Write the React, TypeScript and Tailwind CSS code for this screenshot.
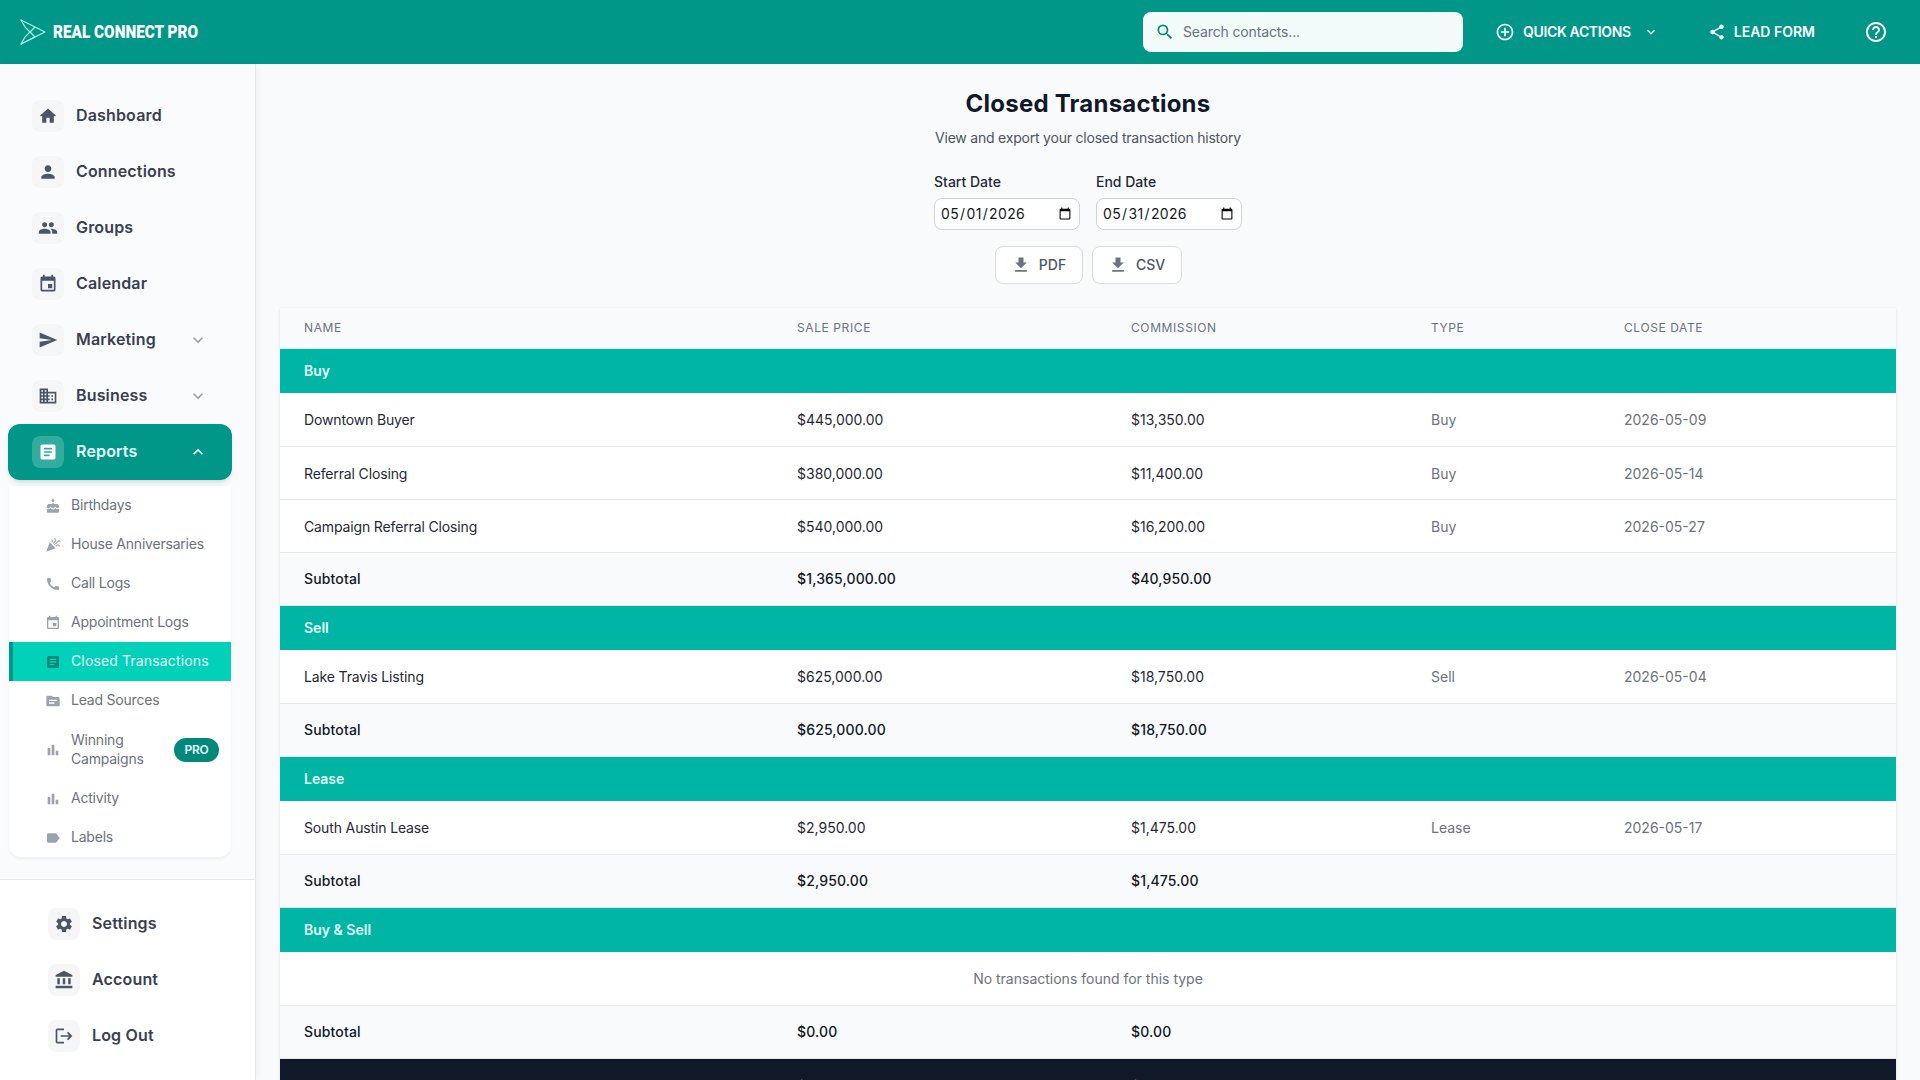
import { ReactNode } from "react";
import { IconType } from "react-icons";
import {
  MdHome, MdPerson, MdPeople, MdEvent, MdSend, MdBusiness, MdExpandMore, MdExpandLess, MdArticle,
  MdCake, MdCelebration, MdCall, MdSource, MdBarChart, MdLabel, MdSettings, MdAccountBalance,
  MdLogout, MdSearch, MdAddCircleOutline, MdShare, MdHelpOutline, MdFileDownload,
} from "react-icons/md";

const navItems: { title: string; icon: IconType; chevron?: boolean }[] = [
  { title: "Dashboard", icon: MdHome },
  { title: "Connections", icon: MdPerson },
  { title: "Groups", icon: MdPeople },
  { title: "Calendar", icon: MdEvent },
  { title: "Marketing", icon: MdSend, chevron: true },
  { title: "Business", icon: MdBusiness, chevron: true },
];

const subItems: { title: string; icon: IconType; active?: boolean; pro?: boolean }[] = [
  { title: "Birthdays", icon: MdCake },
  { title: "House Anniversaries", icon: MdCelebration },
  { title: "Call Logs", icon: MdCall },
  { title: "Appointment Logs", icon: MdEvent },
  { title: "Closed Transactions", icon: MdArticle, active: true },
  { title: "Lead Sources", icon: MdSource },
  { title: "Winning Campaigns", icon: MdBarChart, pro: true },
  { title: "Activity", icon: MdBarChart },
  { title: "Labels", icon: MdLabel },
];

const bottomItems = [
  { title: "Settings", icon: MdSettings },
  { title: "Account", icon: MdAccountBalance },
  { title: "Log Out", icon: MdLogout },
];

type Tx = { name: string; price: string; commission: string; type: string; date: string };

const sections: { title: string; rows: Tx[]; price: string; commission: string }[] = [
  {
    title: "Buy",
    rows: [
      { name: "Downtown Buyer", price: "$445,000.00", commission: "$13,350.00", type: "Buy", date: "2026-05-09" },
      { name: "Referral Closing", price: "$380,000.00", commission: "$11,400.00", type: "Buy", date: "2026-05-14" },
      { name: "Campaign Referral Closing", price: "$540,000.00", commission: "$16,200.00", type: "Buy", date: "2026-05-27" },
    ],
    price: "$1,365,000.00",
    commission: "$40,950.00",
  },
  {
    title: "Sell",
    rows: [{ name: "Lake Travis Listing", price: "$625,000.00", commission: "$18,750.00", type: "Sell", date: "2026-05-04" }],
    price: "$625,000.00",
    commission: "$18,750.00",
  },
  {
    title: "Lease",
    rows: [{ name: "South Austin Lease", price: "$2,950.00", commission: "$1,475.00", type: "Lease", date: "2026-05-17" }],
    price: "$2,950.00",
    commission: "$1,475.00",
  },
  { title: "Buy & Sell", rows: [], price: "$0.00", commission: "$0.00" },
];

function Logo() {
  return (
    <svg width="26" height="26" viewBox="0 0 26 26" fill="none" stroke="#a7f3e4" strokeWidth="1.2" strokeLinejoin="round">
      <path d="M1 1 L25 13 L1 25 L5 18 L15 8 L7 4 Z" />
      <path d="M1 1 L5 8 L15 18 L7 22 L1 25" />
    </svg>
  );
}

function IconBox({ children, active }: { children: ReactNode; active?: boolean }) {
  return (
    <span className={`w-8 h-8 rounded-lg flex items-center justify-center shrink-0 ${active ? "bg-white/20 text-white" : "bg-[#f4f6f8] text-[#4b5563]"}`}>
      {children}
    </span>
  );
}

function Sidebar() {
  return (
    <aside className="relative z-10 w-[256px] shrink-0 border-r border-[#e5e7eb] flex flex-col bg-[#fafbfd] shadow-[2px_0_8px_rgba(0,0,0,0.04)]">
      <nav className="flex-1 pl-2 pr-[23px] pt-6 min-h-0">
        {navItems.map((item) => {
          const Icon = item.icon;
          return (
            <div key={item.title} className="h-14 flex items-center gap-3 px-6 text-[#374151]">
              <IconBox><Icon size={20} /></IconBox>
              <span className="flex-1 text-base font-semibold tracking-[0.01em] pb-[2px]">{item.title}</span>
              {item.chevron && <MdExpandMore size={20} className="text-[#9ca3af]" />}
            </div>
          );
        })}
        <div className="h-14 flex items-center gap-3 px-6 rounded-xl bg-[#009688] text-[#e6fffa] shadow-md">
          <IconBox active><MdArticle size={20} /></IconBox>
          <span className="flex-1 text-base font-semibold tracking-[0.01em] pb-[2px]">Reports</span>
          <MdExpandLess size={20} className="text-white" />
        </div>
        <div className="mt-[6px] mx-px bg-white rounded-b-xl border-b border-[#f1f3f5] shadow-[0_1px_3px_rgba(0,0,0,0.05)] overflow-hidden">
          {subItems.map((item) => {
            const Icon = item.icon;
            return (
              <div
                key={item.title}
                className={`flex items-center gap-[10px] pr-3 py-[10px] text-sm leading-[19px] ${
                  item.active ? "bg-[#00d1b8] text-[#e6fffa] border-l-4 border-[#009688] pl-[32px] tracking-[0.01em]" : "text-[#6b7280] pl-[36px] tracking-[-0.015em]"
                } ${item.pro ? "h-[59px]" : ""}`}
              >
                <Icon size={16} className={`shrink-0 ${item.active ? "text-[#00897b]" : "text-[#9ca3af]"}`} />
                <span className="flex-1 -translate-y-px">{item.title}</span>
                {item.pro && (
                  <span className="h-6 w-[45px] rounded-full bg-[#00897b] text-[#e6fffa] text-xs font-semibold flex items-center justify-center">
                    PRO
                  </span>
                )}
              </div>
            );
          })}
        </div>
      </nav>
      <div className="border-t border-[#e5e7eb] bg-white py-4 pl-12">
        {bottomItems.map((item) => {
          const Icon = item.icon;
          return (
            <div key={item.title} className="h-14 flex items-center gap-3 text-[#374151]">
              <IconBox><Icon size={20} /></IconBox>
              <span className="text-base font-semibold tracking-[0.01em] pb-[2px]">{item.title}</span>
            </div>
          );
        })}
      </div>
    </aside>
  );
}

function Header() {
  return (
    <header className="h-16 shrink-0 bg-[#009688] flex items-center pl-5 text-white">
      <Logo />
      <span className="ml-[7px] w-[147px] text-[18px] font-black whitespace-nowrap origin-left scale-x-[0.85] -translate-y-px font-['Roboto',sans-serif]">REAL CONNECT PRO</span>
      <div className="ml-auto w-[320px] h-10 rounded-lg bg-[#f2fbfa] flex items-center pl-3 gap-2">
        <MdSearch size={20} className="text-[#00897b]" />
        <span className="text-sm tracking-[-0.01em] text-[#6b7280]">Search contacts...</span>
      </div>
      <div className="ml-8 flex items-center gap-2">
        <MdAddCircleOutline size={20} />
        <span className="text-sm font-semibold tracking-tight">QUICK ACTIONS</span>
        <MdExpandMore size={16} className="ml-1" />
      </div>
      <div className="ml-[49px] flex items-center gap-2">
        <MdShare size={18} />
        <span className="text-sm font-semibold">LEAD FORM</span>
      </div>
      <MdHelpOutline size={24} className="ml-[49px] mr-8" />
    </header>
  );
}

function DateField({ label, value }: { label: string; value: string }) {
  return (
    <label className="block">
      <span className="block text-sm font-medium text-[#1f2937] mb-[6px]">{label}</span>
      <input
        type="date"
        defaultValue={value}
        className="block w-[146px] h-8 px-[5px] bg-white border border-[#d1d5db] rounded-lg text-sm tracking-wide text-[#111827] font-['Inter',sans-serif]"
      />
    </label>
  );
}

function ExportButton({ label, width }: { label: string; width: string }) {
  return (
    <button className={`h-[38px] ${width} bg-white border border-[#d9dde3] rounded-lg flex items-center justify-center gap-2 text-sm font-medium text-[#4b5563]`}>
      <MdFileDownload size={20} className="text-[#6b7280]" />
      {label}
    </button>
  );
}

function Table() {
  return (
    <div className="bg-white shadow-sm">
      <table className="w-full table-fixed text-sm">
        <colgroup>
          <col className="w-[493px]" />
          <col className="w-[334px]" />
          <col className="w-[300px]" />
          <col className="w-[193px]" />
          <col />
        </colgroup>
        <thead>
          <tr className="bg-[#f9fafc] text-left text-xs uppercase tracking-wider text-[#6b7280] border-b border-[#ccfbf1]">
            {["Name", "Sale Price", "Commission", "Type", "Close Date"].map((h) => (
              <th key={h} className="px-6 py-3 leading-4 font-normal">{h}</th>
            ))}
          </tr>
        </thead>
        <tbody>
          {sections.map((s) => (
            <Section key={s.title} title={s.title} rows={s.rows} price={s.price} commission={s.commission} />
          ))}
          <tr className="bg-[#111827] text-white font-semibold">
            <td className="px-6 py-[18px]">Grand Total</td>
            <td className="px-6 py-[18px]">$1,992,950.00</td>
            <td className="px-6 py-[18px]">$61,175.00</td>
            <td />
            <td />
          </tr>
        </tbody>
      </table>
    </div>
  );
}

function Section({ title, rows, price, commission }: { title: string; rows: Tx[]; price: string; commission: string }) {
  return (
    <>
      <tr className="bg-[#00b5a3]">
        <td colSpan={5} className="px-6 py-3 font-semibold text-[#e6fffa]">{title}</td>
      </tr>
      {rows.length === 0 && (
        <tr className="border-b border-[#e5e7eb]">
          <td colSpan={5} className="h-[53px] px-6 pt-[2px] text-center text-[#6b7280]">No transactions found for this type</td>
        </tr>
      )}
      {rows.map((r) => (
        <tr key={r.name} className="border-b border-[#e5e7eb]">
          <td className="h-[53px] px-6 pt-[2px] tracking-[-0.01em] text-[#1f2937]">{r.name}</td>
          <td className="h-[53px] px-6 pt-[2px] text-[#1f2937]">{r.price}</td>
          <td className="h-[53px] px-6 pt-[2px] text-[#1f2937]">{r.commission}</td>
          <td className="h-[53px] px-6 pt-[2px] text-[#6b7280]">{r.type}</td>
          <td className="h-[53px] px-6 pt-[2px] text-[#6b7280]">{r.date}</td>
        </tr>
      ))}
      <tr className="bg-[#f8fafc] font-medium tracking-[0.01em] text-[#111827] border-b border-[#e5e7eb]">
        <td className="h-[53.5px] px-6">Subtotal</td>
        <td className="h-[53.5px] px-6">{price}</td>
        <td className="h-[53.5px] px-6">{commission}</td>
        <td />
        <td />
      </tr>
    </>
  );
}

export default function App() {
  return (
    <div className="h-screen overflow-hidden flex flex-col bg-[#f8fafc] font-['Inter',sans-serif]">
      <Header />
      <div className="flex-1 flex min-h-0">
        <Sidebar />
        <main className="flex-1 min-w-0 overflow-hidden px-6 pt-6">
          <h1 className="text-2xl font-bold tracking-[0.01em] text-center text-[#111827]">Closed Transactions</h1>
          <p className="mt-2 text-sm tracking-[-0.015em] text-center text-[#4b5563]">View and export your closed transaction history</p>
          <div className="mt-6 flex justify-center gap-4">
            <DateField label="Start Date" value="2026-05-01" />
            <DateField label="End Date" value="2026-05-31" />
          </div>
          <div className="mt-4 mb-6 flex justify-center gap-[9px]">
            <ExportButton label="PDF" width="w-[88px]" />
            <ExportButton label="CSV" width="w-[90px]" />
          </div>
          <Table />
        </main>
      </div>
    </div>
  );
}
